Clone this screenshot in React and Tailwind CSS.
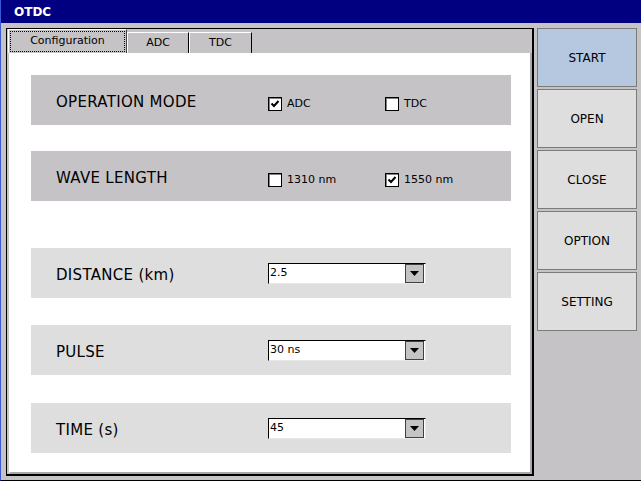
import React from 'react';

const font = "font-['DejaVu_Sans',_sans-serif]";

function CheckBox({ checked, label, wide }) {
  return (
    <div className={`flex items-center gap-[5px] mt-[8px] ${wide ? 'w-[117px]' : ''}`}>
      <div className="w-[14px] h-[14px] bg-white border border-black shadow-[inset_1px_1px_0_#808080] flex items-center justify-center">
        {checked && (
          <svg width="10" height="10" viewBox="0 0 10 10">
            <path d="M1.5 4.5 L4 7 L8.5 2" fill="none" stroke="black" strokeWidth="2" />
          </svg>
        )}
      </div>
      <span className="text-[11px] text-black">{label}</span>
    </div>
  );
}

function Dropdown({ value }) {
  return (
    <div className="w-[158px] h-[21px] bg-white border-t border-l border-black border-r border-b border-r-[#e8e8e8] border-b-[#e8e8e8] flex items-center">
      <span className="flex-1 pl-[1px] text-[11px] text-black">{value}</span>
      <div className="w-[19px] h-[19px] bg-[#c6c3c6] border border-[#404040] flex items-center justify-center mr-[1px]">
        <svg width="9" height="5" viewBox="0 0 9 5">
          <path d="M0 0 H9 L4.5 5 Z" fill="black" />
        </svg>
      </div>
    </div>
  );
}

function Row({ label, dark, children, className }) {
  return (
    <div className={`ml-[21px] w-[480px] h-[50px] flex items-center ${dark ? 'bg-[#c6c3c6]' : 'bg-[#dedede]'} ${className}`}>
      <div className="w-[237px] pl-[25px] pt-[5px] text-[15px] tracking-[0.3px] text-black">{label}</div>
      {children}
    </div>
  );
}

function SideButton({ label, active }) {
  return (
    <button className={`h-[59px] w-[100px] border border-[#7b7b7b] text-[12px] text-black ${active ? 'bg-[#b5c8df]' : 'bg-[#dedede]'}`}>
      {label}
    </button>
  );
}

export default function App() {
  return (
    <div className={`w-[641px] h-[481px] bg-[#c6c3c6] border-l border-[#3a5ad6] border-b border-b-black flex flex-col ${font}`}>
      <div className="h-[23px] bg-[#000080] text-white font-bold text-[12px] pl-[13px] flex items-center">OTDC</div>

      <div className="flex pt-[5px]">
        {/* tab control */}
        <div className="ml-[5px] w-[528px] h-[448px] border-l border-t border-black border-r-2 border-b-2 flex flex-col">
          <div className="h-[24px] flex items-end pl-[1px]">
            <div className="w-[119px] h-[24px] border-l border-t border-white border-r border-r-[#404040] p-[1px]">
              <div className="h-full border border-dotted border-black flex items-center justify-center text-[11px] text-black">
                Configuration
              </div>
            </div>
            <div className="w-[62px] h-[21px] border-l border-t border-white border-r border-r-black flex items-center justify-center text-[11px] text-black">
              ADC
            </div>
            <div className="w-[63px] h-[21px] border-l border-t border-white border-r border-r-black flex items-center justify-center text-[11px] text-black">
              TDC
            </div>
          </div>

          <div className="ml-[2px] flex-1 bg-white border-l border-white border-r-2 border-b-2 border-r-[#a8a8a8] border-b-[#a8a8a8] flex flex-col pt-[22px]">
            <Row label="OPERATION MODE" dark>
              <CheckBox checked label="ADC" wide />
              <CheckBox label="TDC" />
            </Row>
            <Row label="WAVE LENGTH" dark className="mt-[26px]">
              <CheckBox label="1310 nm" wide />
              <CheckBox checked label="1550 nm" />
            </Row>
            <Row label="DISTANCE (km)" className="mt-[47px]">
              <Dropdown value="2.5" />
            </Row>
            <Row label="PULSE" className="mt-[27px]">
              <Dropdown value="30 ns" />
            </Row>
            <Row label="TIME (s)" className="mt-[28px]">
              <Dropdown value="45" />
            </Row>
          </div>
        </div>

        {/* side buttons */}
        <div className="ml-[3px] flex flex-col gap-[2px]">
          <SideButton label="START" active />
          <SideButton label="OPEN" />
          <SideButton label="CLOSE" />
          <SideButton label="OPTION" />
          <SideButton label="SETTING" />
        </div>
      </div>
    </div>
  );
}
